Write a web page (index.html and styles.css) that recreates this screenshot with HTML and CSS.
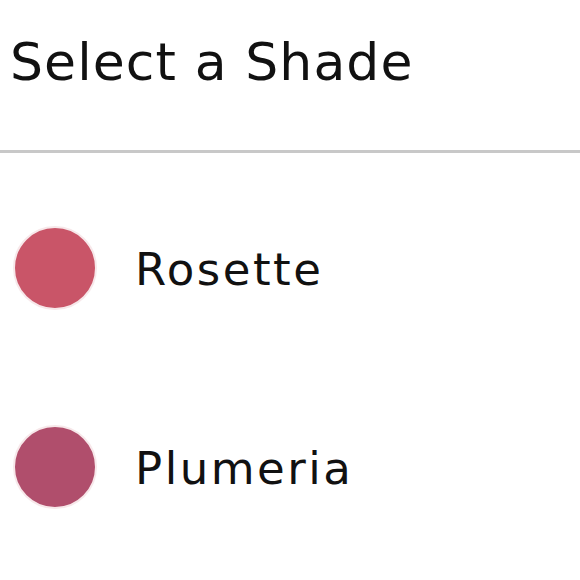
FILE: index.html
```html
<!DOCTYPE html>
<html lang="en">
<head>
    <meta charset="UTF-8">
    <meta name="viewport" content="width=device-width, initial-scale=1.0">
    <title>Select a Shade</title>
    <link rel="stylesheet" href="styles.css">
</head>
<body>
<div class="header">
    <h1>Select a Shade</h1>
</div>

<ul class="shades">
    <li class="shade">
        <span class="swatch rosette"></span>
        <span class="name">Rosette</span>
    </li>
    <li class="shade">
        <span class="swatch plumeria"></span>
        <span class="name">Plumeria</span>
    </li>
</ul>
</body>
</html>
```

FILE: styles.css
```css
body { margin: 0; font-family: "DejaVu Sans", "Open Sans", sans-serif; background: #fff; color: #111; }
.header { box-sizing: border-box; height: 153px; padding: 36px 0 0 10px; border-bottom: 3px solid #c8c8c8; }
h1 { margin: 0; font-size: 52px; font-weight: 400; line-height: 1; letter-spacing: 1.1px; }
.shades { list-style: none; margin: 0; padding: 15px 0 0 0; }
.shade { display: flex; align-items: center; height: 199px; padding-left: 13px; }
.swatch {
    box-sizing: border-box;
    width: 84px;
    height: 84px;
    border-radius: 50%;
    border: 2px solid #f7e8ea;
    margin-right: 38px;
}
.rosette { background: #c95568; }
.plumeria { background: #b04e6c; }
.name { font-size: 45px; line-height: 1; letter-spacing: 2.5px; padding-top: 4px; }
```
